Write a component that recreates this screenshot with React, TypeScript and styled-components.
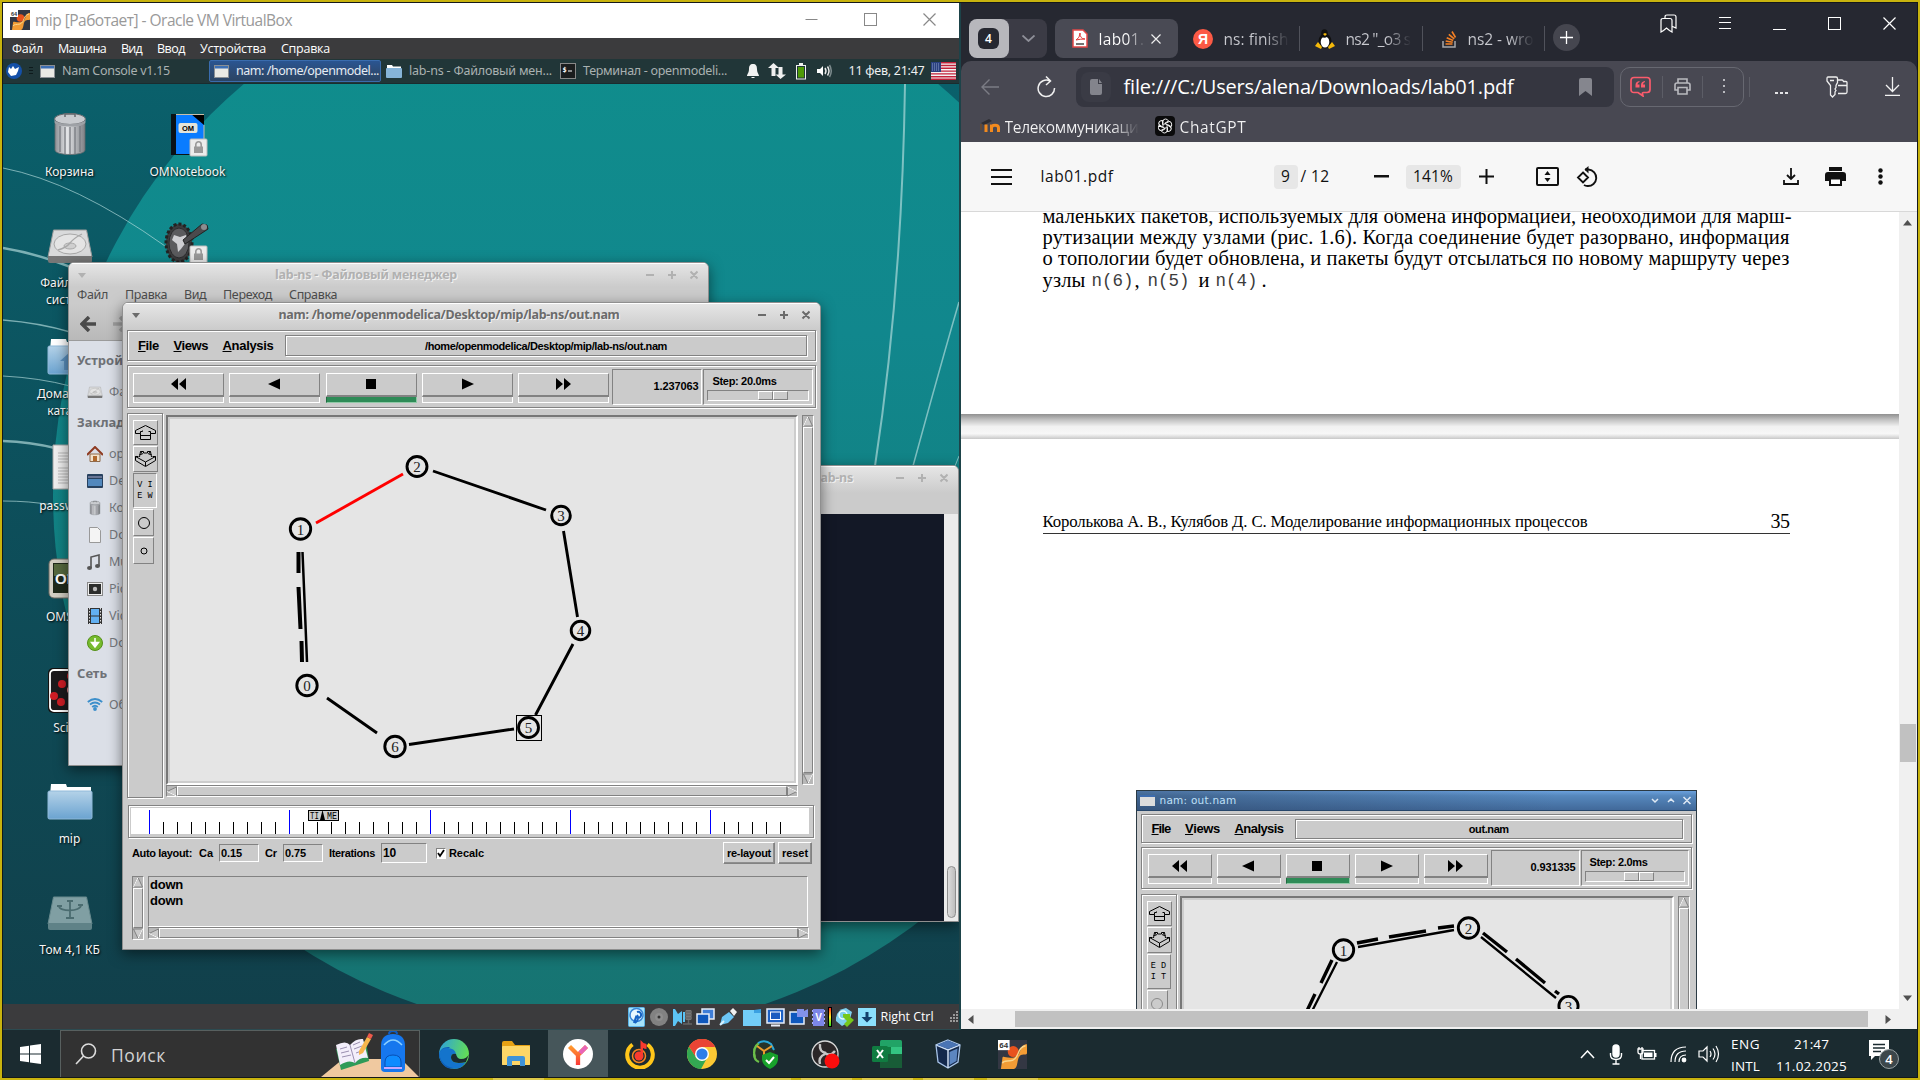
import React, { useLayoutEffect, useRef } from 'react';
import styled, { createGlobalStyle, css } from 'styled-components';

const UI = '"Open Sans", "Noto Sans", sans-serif';
const XFCE = '"Noto Sans", "Open Sans", sans-serif';
const TK = '"Liberation Sans", Arial, sans-serif';
const SERIF = '"Liberation Serif", "Times New Roman", serif';
const MONO = '"Liberation Mono", monospace';

const Global = createGlobalStyle`
  * { box-sizing: border-box; }
  html, body { margin: 0; padding: 0; background: #1c2b30; overflow: hidden; }
  svg { display: block; flex: none; }
`;

/* ---------- text that is tracked to fill a given width ---------- */

const TextBox = styled.span<{ $w: number }>`
  display: block;
  flex: none;
  width: ${p => p.$w}px;
  white-space: pre;
`;

function FitText({ w, className, children }: { w: number; className?: string; children: React.ReactNode }) {
  const inner = useRef<HTMLSpanElement>(null);
  useLayoutEffect(() => {
    const el = inner.current;
    if (!el) return;
    el.style.letterSpacing = '0px';
    const count = Math.max(1, (el.textContent || '').length);
    el.style.letterSpacing = `${(w - el.getBoundingClientRect().width) / count}px`;
  });
  return (
    <TextBox $w={w} className={className}>
      <span ref={inner}>{children}</span>
    </TextBox>
  );
}

/* ---------- screen ---------- */

const Screen = styled.div`
  position: relative;
  width: 1920px;
  height: 1080px;
  overflow: hidden;
  display: flex;
  flex-direction: column;
  background: #1c2b30;
`;
const ScreenEdge = styled.div`
  position: absolute;
  inset: 0;
  border: 2px solid #c8b30e;
  box-shadow: inset 0 0 0 1px #14181a;
  pointer-events: none;
  z-index: 50;
`;
const Windows = styled.div`
  display: flex;
  height: 1030px;
  padding: 3px 3px 0 3px;
`;

/* ---------- virtual machine window ---------- */

const VM = styled.section`
  width: 958px;
  display: flex;
  flex-direction: column;
  border-right: 2px solid #1d4349;
  border-bottom: 1px solid #2c4a50;
  font-family: ${UI};
`;
const VMTitle = styled.header`
  height: 35px;
  flex: none;
  display: flex;
  align-items: center;
  padding: 0 23px 2px 7px;
  background: #fff;
`;
const VMTitleText = styled(FitText)`
  margin: 0 auto 0 5px;
  font-size: 15.5px;
  line-height: 20px;
  color: #999;
`;
const VMButtons = styled.div`
  display: flex;
  gap: 46px;
`;
const VMMenu = styled.nav`
  height: 21px;
  flex: none;
  display: flex;
  align-items: center;
  gap: 15px;
  padding-left: 9px;
  background: #3b3b3d;
`;
const VMMenuItem = styled(FitText)`
  font-size: 12.5px;
  line-height: 20px;
  color: #fff;
`;
const Panel = styled.div`
  height: 25px;
  flex: none;
  display: flex;
  align-items: center;
  background: #213638;
  border-bottom: 1px solid #1a2c2f;
  padding-left: 3px;
  font-family: ${XFCE};
`;
const Grip = styled.div`
  width: 4px;
  height: 9px;
  margin: 0 7px 0 7px;
  background: repeating-linear-gradient(#0e1a1c 0 1px, transparent 1px 3px);
`;
const Task = styled.div<{ $w: number; $on?: boolean }>`
  width: ${p => p.$w}px;
  height: 22px;
  flex: none;
  display: flex;
  align-items: center;
  gap: 7px;
  ${p => p.$on && css`
    background: linear-gradient(#2a5592, #2d4a72 60%, #2a4464);
    border: 1px solid #3a6cae;
    border-radius: 2px;
    padding-left: 4px;
  `}
`;
const TaskLabel = styled(FitText)<{ $on?: boolean }>`
  font-size: 12.5px;
  line-height: 18px;
  color: ${p => (p.$on ? '#e6ecf2' : '#a9b1b1')};
`;
const Tray = styled.div`
  display: flex;
  align-items: center;
  margin-left: auto;
  padding-right: 3px;
`;
const TraySlot = styled.div<{ $l: number }>`
  margin-left: ${p => p.$l}px;
`;
const PanelClock = styled(FitText)`
  margin: 0 6px 0 17px;
  font-size: 12.5px;
  line-height: 18px;
  color: #eef0f0;
`;
const Desktop = styled.div`
  position: relative;
  flex: 1;
  overflow: hidden;
  background: #0b5a66;
`;
const Wallpaper = styled.svg`
  position: absolute;
  inset: 0;
`;
const IconGrid = styled.div`
  position: relative;
  display: grid;
  grid-auto-flow: column;
  grid-template-rows: repeat(8, 111.200px);
  grid-auto-columns: 118px;
  padding: 26px 0 0 7.500px;
`;
const DesktopIcon = styled.div`
  display: flex;
  flex-direction: column;
  align-items: center;
  font-family: ${XFCE};
`;
const IconLabel = styled.div`
  margin-top: 5px;
  font-size: 12px;
  line-height: 17px;
  color: #f4f6f6;
  text-align: center;
  white-space: pre;
  text-shadow: 1px 1px 2px #000;
`;

const VMStatus = styled.footer`
  height: 25px;
  flex: none;
  display: flex;
  align-items: center;
  justify-content: flex-end;
  background: #3b3b3d;
  padding-right: 1px;
`;
const StatusIcons = styled.div`
  display: flex;
  gap: 4px;
  align-items: center;
  margin-right: 3px;
`;
const HostKey = styled(FitText)`
  margin: 0 14px 0 1px;
  font-size: 12.5px;
  color: #fff;
`;

/* ---------- xfce windows ---------- */

const Win = styled.div<{ $x: number; $y: number; $w: number; $h: number }>`
  position: absolute;
  left: ${p => p.$x}px;
  top: ${p => p.$y}px;
  width: ${p => p.$w}px;
  height: ${p => p.$h}px;
  display: flex;
  flex-direction: column;
  background: #cbcbcb;
  border: 1px solid #8f8f8f;
  border-radius: 6px 6px 0 0;
  box-shadow: inset 0 1px #fff, 0 4px 14px rgba(0, 0, 0, 0.5);
  overflow: hidden;
  font-family: ${XFCE};
`;
const WinTitle = styled.div<{ $on?: boolean; $h: number }>`
  height: ${p => p.$h}px;
  flex: none;
  display: flex;
  align-items: center;
  justify-content: space-between;
  padding: 0 10px ${p => p.$h - 24}px 9px;
  background: linear-gradient(#e6e6e6, #cbcbcb);
  box-shadow: inset 0 1px #fff;
  color: ${p => (p.$on ? '#6b6b6b' : '#b1b1b1')};
`;
const WinName = styled(FitText)`
  font-size: 12.5px;
  line-height: 18px;
  font-weight: 700;
  text-shadow: 1px 1px #f2f2f2;
`;
const FmMenu = styled.div`
  display: flex;
  gap: 17px;
  height: 16px;
  flex: none;
  padding-left: 8px;
  align-items: center;
`;
const FmMenuItem = styled(FitText)`
  font-size: 12.5px;
  line-height: 16px;
  color: #4d4d4d;
`;
const FmTools = styled.div`
  display: flex;
  flex: none;
  align-items: center;
  gap: 17px;
  height: 38px;
  padding: 4px 0 0 11px;
  border-bottom: 1px solid #9b9b9b;
  background: linear-gradient(#cbcbcb, #b9b9b9);
`;
const FmSide = styled.div`
  flex: 1;
  padding-top: 7px;
  background: #dbdfe7;
`;
const FmHead = styled.div`
  height: 25px;
  margin-bottom: 5px;
  padding-left: 8px;
  font-size: 13px;
  line-height: 25px;
  font-weight: 700;
  color: #6e7176;
`;
const FmRow = styled.div`
  display: flex;
  align-items: center;
  gap: 6px;
  height: 27px;
  padding-left: 18px;
  font-size: 12.5px;
  color: #75787c;
`;
const FmSection = styled.div`
  margin-bottom: 5px;
`;
const TermBody = styled.div`
  flex: 1;
  margin-top: 21px;
  display: flex;
  background: #131826;
  justify-content: flex-end;
`;
const TermScroll = styled.div`
  width: 14px;
  background: #ebebeb;
  display: flex;
  align-items: flex-end;
  justify-content: center;
  padding-bottom: 3px;
`;
const TermThumb = styled.div`
  width: 9px;
  height: 52px;
  border: 1px solid #8d8d8d;
  border-radius: 5px;
  background: linear-gradient(90deg, #dcdcdc, #bdbdbd);
`;

/* ---------- nam ---------- */

const NamContent = styled.div<{ $top?: number }>`
  flex: 1;
  padding: ${p => p.$top || 0}px 4px 0;
  font-family: ${TK};
  font-weight: 700;
  color: #000;
`;
const groove = css`
  border: 1px solid #828282;
  box-shadow: inset 1px 1px #fff, 1px 1px #fff;
`;
const sunken = css`
  border: 1px solid;
  border-color: #828282 #fff #fff #828282;
`;
const raised = css`
  border: 1px solid;
  border-color: #fff #828282 #828282 #fff;
`;
const NamMenu = styled.div<{ $h: number }>`
  height: ${p => p.$h}px;
  display: flex;
  align-items: center;
  padding: 0 8px 0 10px;
  background: #cbcbcb;
  ${groove}
`;
const NamMenuItem = styled(FitText)`
  margin-right: 14.5px;
  font-size: 13px;
  line-height: 16px;
  &::first-letter { text-decoration: underline; }
`;
const NamPath = styled.div<{ $h: number }>`
  flex: 1;
  height: ${p => p.$h}px;
  margin-left: -3px;
  display: flex;
  align-items: center;
  justify-content: center;
  ${groove}
`;
const NamSmall = styled(FitText)`
  font-size: 11px;
  line-height: 14px;
`;
const NamControls = styled.div<{ $h: number }>`
  height: ${p => p.$h}px;
  margin-top: 4px;
  display: flex;
  align-items: center;
  padding: 0 2px 0 5px;
  background: #cbcbcb;
  ${groove}
`;
const PlayKey = styled.div<{ $w: number; $m: number; $on?: boolean }>`
  width: ${p => p.$w}px;
  height: 30px;
  margin: 2px ${p => p.$m}px 0 0;
  flex: none;
  display: flex;
  flex-direction: column;
  &::after {
    content: '';
    height: 5px;
    border: 1px solid #fff;
    border-top: 0;
    ${p => p.$on && 'background: #2e8b57; border-color: #1f6b40 #8fc9a6 #8fc9a6 #1f6b40;'}
  }
`;
const KeyFace = styled.div`
  flex: 1;
  display: flex;
  align-items: center;
  justify-content: center;
  border: 1px solid;
  border-color: #fff #828282 #828282 #fff;
  border-bottom-width: 2px;
`;
const TimeBox = styled.div<{ $w: number }>`
  width: ${p => p.$w}px;
  height: 36px;
  margin-left: -2px;
  display: flex;
  align-items: center;
  justify-content: flex-end;
  padding: 0 3px 2px 0;
  ${sunken}
`;
const StepBox = styled.div`
  flex: 1;
  height: 36px;
  padding: 4px 3px 0 3px;
  margin-left: 1px;
  ${sunken}
`;
const StepLabel = styled(NamSmall)`
  margin-left: 5px;
`;
const Trough = styled.div`
  height: 11px;
  margin-top: 2px;
  display: flex;
  ${sunken}
`;
const Knob = styled.div<{ $l: number }>`
  margin-left: ${p => p.$l}px;
  width: 30px;
  display: flex;
  &::before, &::after { content: ''; flex: 1; border: 1px solid; border-color: #fff #828282 #828282 #fff; }
`;
const NamBody = styled.div`
  display: flex;
  margin-top: 5px;
`;
const ToolBox = styled.div<{ $h: number }>`
  width: 36px;
  height: ${p => p.$h}px;
  flex: none;
  display: flex;
  flex-direction: column;
  align-items: flex-start;
  gap: 1px;
  padding: 6px 0 0 5px;
  ${groove}
`;
const Tool = styled.div<{ $w: number; $h: number; $in?: boolean }>`
  width: ${p => p.$w}px;
  height: ${p => p.$h}px;
  flex: none;
  display: flex;
  align-items: center;
  justify-content: center;
  ${p => (p.$in ? sunken : raised)}
`;
const ToolWord = styled.div`
  font-family: ${MONO};
  font-weight: 400;
  font-size: 8.5px;
  line-height: 11px;
  white-space: pre;
`;
const CanvasCol = styled.div`
  margin: 2px 0 0 3px;
`;
const NamCanvas = styled.div<{ $w: number; $h: number }>`
  width: ${p => p.$w}px;
  height: ${p => p.$h}px;
  background: #e5e5e5;
  border: 2px solid;
  border-color: #777 #fff #fff #777;
  box-shadow: inset 0 0 0 2px #cdcdcd;
`;
const Scroll = styled.div<{ $len: number; $v?: boolean }>`
  display: flex;
  flex-direction: ${p => (p.$v ? 'column' : 'row')};
  width: ${p => (p.$v ? 12 : p.$len)}px;
  height: ${p => (p.$v ? p.$len : 12)}px;
  background: #b8b8b8;
  flex: none;
  ${sunken}
`;
const ScrollThumb = styled.div`
  flex: 1;
  background: #cbcbcb;
  ${raised}
`;
const VSlot = styled.div`
  margin: 2px 0 0 4px;
`;
const Timeline = styled.div`
  width: 686px;
  height: 33px;
  margin: 7px 0 0 1px;
  padding: 2px;
  ${groove}
`;
const LayoutRow = styled.div`
  display: flex;
  align-items: center;
  height: 22px;
  margin: 4px 0 0 5px;
`;
const Entry = styled.div<{ $w: number; $h: number; $l: number; $r: number }>`
  width: ${p => p.$w}px;
  height: ${p => p.$h}px;
  margin: 0 ${p => p.$r}px 0 ${p => p.$l}px;
  padding-left: 1px;
  display: flex;
  align-items: center;
  ${sunken}
`;
const BigEntryText = styled(FitText)`
  font-size: 12px;
`;
const Check = styled.div`
  width: 10px;
  height: 11px;
  margin: 0 3px 0 9px;
  background: #fff;
  ${sunken}
`;
const TkButton = styled.div<{ $w: number; $l: string }>`
  width: ${p => p.$w}px;
  height: 22px;
  margin-left: ${p => p.$l};
  display: flex;
  align-items: center;
  justify-content: center;
  ${raised}
  box-shadow: inset -1px -1px #8e8e8e;
`;
const LogRow = styled.div`
  display: flex;
  gap: 4px;
  margin: 12px 0 0 5px;
`;
const LogText = styled.div`
  width: 660px;
  height: 51px;
  padding-left: 1px;
  ${sunken}
`;
const LogLine = styled(FitText)`
  font-size: 13px;
  line-height: 16px;
`;

/* ---------- browser ---------- */

const Browser = styled.section`
  width: 957px;
  display: flex;
  flex-direction: column;
  background: #262831;
  font-family: ${UI};
  border-bottom: 1px solid #16292e;
`;
const TabStrip = styled.div`
  height: 58px;
  flex: none;
  display: flex;
  align-items: center;
  padding: 13px 21px 0 8px;
`;
const TabGroup = styled.div`
  width: 78px;
  height: 39px;
  flex: none;
  display: flex;
  align-items: center;
  background: #3b3b45;
  border-radius: 8px;
  margin-right: 8px;
`;
const GroupCount = styled.div`
  width: 40px;
  height: 39px;
  margin-right: 13px;
  display: flex;
  align-items: center;
  justify-content: center;
  border-radius: 8px;
  background: #b7b7bc;
`;
const GroupBadge = styled.div`
  width: 21px;
  height: 21px;
  border-radius: 6px;
  background: #262831;
  color: #fff;
  font-size: 12px;
  font-weight: 600;
  line-height: 21px;
  text-align: center;
`;
const Tab = styled.div<{ $w: number; $on?: boolean; $sep?: boolean; $p: number }>`
  width: ${p => p.$w}px;
  height: 39px;
  flex: none;
  display: flex;
  align-items: center;
  padding-left: ${p => p.$p}px;
  border-radius: 8px;
  ${p => p.$on && 'background: #494a54;'}
  ${p => p.$sep && 'border-radius: 0; background: linear-gradient(#50525b, #50525b) right center / 1px 25px no-repeat;'}
`;
const TabText = styled(FitText)<{ $on?: boolean }>`
  margin-left: 11px;
  font-size: 15.5px;
  line-height: 22px;
  span {
    background: linear-gradient(90deg, ${p => (p.$on ? '#fff' : '#c9cad0')} 62%, transparent);
    -webkit-background-clip: text;
    background-clip: text;
    color: transparent;
  }
`;
const NewTab = styled.div`
  width: 27px;
  height: 27px;
  margin: 0 auto 3px 8px;
  display: flex;
  align-items: center;
  justify-content: center;
  border-radius: 50%;
  background: #45464f;
`;
const WinKeys = styled.div`
  display: flex;
  align-items: center;
  gap: 42px;
  margin-bottom: 31px;
`;
const Toolbar = styled.div`
  height: 81px;
  flex: none;
  background: #484852;
  border-radius: 10px 10px 0 0;
`;
const AddressRow = styled.div`
  display: flex;
  align-items: center;
  height: 51px;
  padding-left: 20px;
`;
const Omnibox = styled.div`
  width: 538px;
  height: 40px;
  flex: none;
  margin-left: 20px;
  display: flex;
  align-items: center;
  padding: 0 22px 0 5px;
  border-radius: 8px;
  background: #353640;
`;
const SiteBadge = styled.div`
  width: 30px;
  height: 30px;
  display: flex;
  align-items: center;
  justify-content: center;
  border-radius: 8px;
  background: #3a3b45;
`;
const Url = styled(FitText)`
  margin: 0 auto 0 13px;
  font-size: 20px;
  line-height: 28px;
  color: #fff;
`;
const Actions = styled.div`
  width: 124px;
  height: 40px;
  flex: none;
  margin-left: 6px;
  display: flex;
  align-items: center;
  padding-left: 9px;
  gap: 11px;
  border: 1px solid #676871;
  border-radius: 10px;
`;
const Rule = styled.i<{ $h: number }>`
  width: 1px;
  height: ${p => p.$h}px;
  flex: none;
  background: #5c5d66;
`;
const More = styled.div`
  display: flex;
  gap: 2px;
  margin: 12px 38px 0 25px;
  i { width: 3px; height: 2px; background: #e4e4e6; }
`;
const Bookmarks = styled.div`
  height: 28px;
  display: flex;
  align-items: center;
  padding: 0 0 0 19px;
`;
const BookmarkText = styled(FitText)<{ $fade?: boolean }>`
  margin: 2px 0 0 5px;
  font-size: 15.5px;
  line-height: 22px;
  span {
    color: transparent;
    background: linear-gradient(90deg, #f2f2f3 ${p => (p.$fade ? '80%, transparent' : '100%, #f2f2f3')});
    -webkit-background-clip: text;
    background-clip: text;
  }
`;
const PdfBar = styled.div`
  height: 70px;
  flex: none;
  display: flex;
  align-items: center;
  padding: 0 32px 0 30px;
  background: #f7f7f7;
  border-bottom: 1px solid #d8d8d8;
`;
const PdfText = styled(FitText)<{ $l: number; $m?: boolean }>`
  margin: 0 0 2px ${p => p.$l}px;
  font-size: 15.5px;
  line-height: 22px;
  font-weight: ${p => (p.$m ? 500 : 400)};
  color: #111;
`;
const PdfField = styled.div<{ $w: number; $l: number; $r: number }>`
  width: ${p => p.$w}px;
  height: 24px;
  flex: none;
  margin: 0 ${p => p.$r}px 0 ${p => p.$l}px;
  padding-bottom: 1px;
  display: flex;
  align-items: center;
  justify-content: center;
  border-radius: 4px;
  background: #e7e7e7;
  font-size: 15.5px;
  color: #111;
`;
const Gap = styled.div<{ $w: number }>`
  width: ${p => p.$w}px;
  flex: none;
`;
const Viewer = styled.div`
  height: 797px;
  display: flex;
`;
const Pages = styled.div`
  width: 938px;
  height: 797px;
  overflow: hidden;
  background: #fff;
`;
const PageTop = styled.article`
  height: 202px;
  padding-left: 82px;
  font-family: ${SERIF};
  overflow: hidden;
`;
const Para = styled.div`
  margin-top: -6px;
  display: flex;
  flex-direction: column;
`;
const Line = styled(FitText)`
  font-size: 20.5px;
  line-height: 21.2px;
  color: #000;
`;
const LastLine = styled.div`
  display: flex;
`;
const Code = styled(FitText)`
  margin: 0 1px 0 6px;
  font-family: ${MONO};
  font-size: 17.5px;
  line-height: 22px;
  color: #3c3c3c;
`;
const PageGap = styled.div`
  height: 25px;
  background: linear-gradient(#909090, #c0c0c0 22%, #f1f1f1 50%, #f7f7f7 78%, #ededed 84%, #c8c8c8);
`;
const PageNext = styled.article`
  padding: 72px 0 0 82px;
`;
const RunningHead = styled.div`
  width: 747px;
  height: 23px;
  display: flex;
  align-items: flex-end;
  justify-content: space-between;
  border-bottom: 1px solid #333;
  font-family: ${SERIF};
  color: #000;
`;
const HeadText = styled(FitText)`
  font-size: 16.8px;
  line-height: 22px;
`;
const FolioText = styled(FitText)`
  font-size: 20px;
  line-height: 24px;
`;
const Figure = styled.div`
  width: 561px;
  height: 400px;
  margin: 256px 0 0 93px;
  border: 1px solid #2b3a44;
  background: #cbcbcb;
`;
const FigTitle = styled.div`
  height: 20px;
  display: flex;
  align-items: center;
  justify-content: space-between;
  padding: 0 4px 1px 3px;
  background: linear-gradient(100deg, rgba(40, 60, 90, 0.45), transparent 75%), linear-gradient(#6aa0dc, #5688bd 25%, #41699a);
  border-bottom: 1px solid #26466a;
`;
const FigName = styled(FitText)`
  margin: 0 auto 0 5px;
  font-family: "DejaVu Sans", sans-serif;
  font-size: 10.5px;
  line-height: 14px;
  color: #bfe0f8;
`;
const VBar = styled.div`
  width: 18px;
  height: 797px;
  display: flex;
  flex-direction: column;
  align-items: center;
  padding: 8px 0;
  background: #f0f0f0;
`;
const VThumb = styled.div`
  width: 16px;
  height: 38px;
  margin: 498px 0 auto;
  background: #c1c1c1;
`;
const HBar = styled.div`
  height: 20px;
  display: flex;
  align-items: center;
  padding: 0 0 0 7px;
  background: #f0f0f0;
`;
const HThumb = styled.div`
  width: 853px;
  height: 16px;
  margin: 0 17px 0 41px;
  background: #c1c1c1;
`;

/* ---------- taskbar ---------- */

const Taskbar = styled.footer`
  position: relative;
  height: 50px;
  display: flex;
  align-items: center;
  padding-bottom: 2px;
  background: #1b2b30;
  font-family: ${UI};
`;
const StartKey = styled.div`
  width: 60px;
  padding-left: 20px;
`;
const Search = styled.div`
  width: 360px;
  height: 48px;
  display: flex;
  align-items: center;
  padding-left: 14px;
  background: #323232;
  border: 1px solid #58605f;
`;
const SearchText = styled(FitText)`
  margin: 2px auto 0 14px;
  font-size: 17.5px;
  color: #d2d2d2;
`;
const AppSlot = styled.div<{ $w: number; $on?: boolean; $run?: boolean }>`
  width: ${p => p.$w}px;
  height: 50px;
  margin-bottom: -2px;
  padding-bottom: 2px;
  flex: none;
  display: flex;
  align-items: center;
  justify-content: center;
  position: relative;
  z-index: ${p => (p.$run ? 60 : 1)};
  ${p => p.$on && 'background: #46565a;'}
  ${p => p.$run && 'background: linear-gradient(#dcc94a, #dcc94a) center bottom / 51px 2px no-repeat;'}
`;
const SysTray = styled.div`
  display: flex;
  align-items: center;
  margin-left: auto;
  padding-right: 20px;
  color: #fff;
`;
const Stack = styled.div<{ $l: number }>`
  margin: 2px 0 0 ${p => p.$l}px;
  display: flex;
  flex-direction: column;
  align-items: center;
`;
const StackText = styled(FitText)`
  font-size: 13.5px;
  line-height: 22px;
  color: #fff;
`;

/* ---------- small drawings ---------- */

const WinIcon = () => (
  <svg width="15" height="13"><rect x=".5" y=".5" width="14" height="12" fill="#e9e9e4" stroke="#8a8f94" /><rect x="1" y="1" width="13" height="2.5" fill="#3c6fb4" /></svg>
);
const FolderMini = () => (
  <svg width="16" height="13"><path d="M1 0h5l1 1.500h8v4H1z" fill="#fff" /><rect y="3" width="16" height="10" rx="1" fill="#86b4d8" /></svg>
);
const Lock = ({ x, y }: { x: number; y: number }) => (
  <g transform={`translate(${x} ${y})`}>
    <rect width="17" height="17" rx="1" fill="#ececec" stroke="#bbb" />
    <rect x="4" y="7.500" width="9" height="6.500" fill="#9a9a9a" />
    <path d="M5.800 8V5.500a2.700 2.700 0 0 1 5.400 0V8" fill="none" stroke="#9a9a9a" strokeWidth="1.600" />
  </g>
);
const TrashPic = ({ s = 48 }: { s?: number }) => (
  <svg width={s} height={s} viewBox="0 0 48 48">
    <defs><linearGradient id="tr" x1="0" x2="1"><stop offset="0" stopColor="#8d8f94" /><stop offset=".4" stopColor="#e4e5e8" /><stop offset="1" stopColor="#7d8085" /></linearGradient></defs>
    <path d="M9 12h30v28c0 6-30 6-30 0z" fill="url(#tr)" stroke="#66696d" strokeWidth=".8" />
    <path d="M14 16v26M19 17v27M24 17v27M29 17v27M34 16v26" stroke="#777a80" strokeWidth="1.300" />
    <ellipse cx="24" cy="9" rx="15.500" ry="5.500" fill="#c9cbcf" stroke="#66696d" />
    <path d="M8.500 9v3c0 6 31 6 31 0V9c0 6.500-31 6.500-31 0z" fill="#9ea1a6" />
    <path d="M19 7V4h10v3" fill="none" stroke="#66696d" strokeWidth="1.500" />
  </svg>
);
const DrivePic = ({ usb, s = 48 }: { usb?: boolean; s?: number }) => (
  <svg width={s} height={s} viewBox="0 0 48 48">
    <path d="M7.500 9h33L46 36H2z" fill={usb ? '#809fa3' : '#d9dadb'} stroke={usb ? '#698a8e' : '#9c9c9c'} />
    <path d="M2 35h44v5q0 2-2 2H4q-2 0-2-2z" fill={usb ? '#5f8287' : '#777'} />
    {usb ? (
      <path d="M24 13v17M13 18c0 6 22 6 22-1M20 30h8M21 13h6M11 18h5M32 17h5" fill="none" stroke="#4b6c70" strokeWidth="1.800" />
    ) : (
      <g fill="none" stroke="#a8a8a8"><ellipse cx="24" cy="23" rx="16" ry="10" fill="#e4e4e4" /><ellipse cx="24" cy="25" rx="6" ry="3" fill="#cfcfcf" /><path d="M36 13q-8 4-12 9-4 5-12 7" strokeWidth="1.300" /></g>
    )}
  </svg>
);
const FolderPic = ({ home }: { home?: boolean }) => (
  <svg width="48" height="48">
    <defs><linearGradient id="fo" x2="0" y2="1"><stop offset="0" stopColor="#b4d2e8" /><stop offset="1" stopColor="#6ba3d0" /></linearGradient></defs>
    <path d="M5 7h15l1 3h24v8H4z" fill="#fff" />
    <rect x="2" y="14" width="44" height="28" rx="1.500" fill="url(#fo)" stroke="#8fb9d9" />
    {home && <path d="M14 29l10-9 10 9h-4v9H18v-9z" fill="#5a8fbd" />}
  </svg>
);
const NotebookPic = () => (
  <svg width="48" height="48">
    <rect x="7" y="4" width="33" height="41" fill="#0a1216" />
    <rect x="12" y="5" width="28" height="39" fill="#0a7cff" />
    <path d="M27 4h13v11z" fill="#000" /><path d="M40 15v30M12 4.500h28" stroke="#c9bfa8" />
    <rect x="14.500" y="13" width="19" height="10" rx="2" fill="#e4e4da" />
    <text x="24" y="21" fontFamily="Liberation Sans" fontWeight="700" fontSize="7.500" textAnchor="middle">OM</text>
    <Lock x={26} y={29} />
  </svg>
);
const GearPic = () => (
  <svg width="48" height="48">
    <ellipse cx="15" cy="22" rx="13" ry="19" fill="#3b3b3d" stroke="#222" strokeWidth="3" strokeDasharray="3 2" />
    <ellipse cx="15" cy="22" rx="10" ry="15" fill="#5b5b5e" stroke="#2b2b2d" />
    <path d="M10 14l6 2 6-2 1 6-6 8-3 3-1-8-5-4z" fill="#cfcfd3" />
    <path d="M19 19L38 3l5 1 1 4-6 4-17 11z" fill="#4a4a4d" stroke="#222" /><circle cx="40" cy="6" r="3" fill="#8d8d90" />
    <Lock x={26} y={25} />
  </svg>
);
const DocPic = () => (
  <svg width="48" height="48"><path d="M7 1h34v44H7z" fill="#efefef" stroke="#a5a5a5" /><path d="M12 9h20M12 12h22M12 15h20M12 18h22M12 24h22M12 27h18M12 30h22M12 33h20M12 36h22M12 39h18" stroke="#b9b9b9" /></svg>
);
const OmsPic = () => (
  <svg width="48" height="48"><rect x="3" y="4" width="42" height="39" rx="5" fill="#d3cfc4" stroke="#6f6b62" /><rect x="7" y="8" width="36" height="30" fill="#202a1b" /><rect x="8" y="9" width="34" height="12" fill="#56693f" /><text x="9" y="29" fontFamily="Liberation Sans" fontSize="15" fontWeight="700" fill="#fff">OM</text></svg>
);
const SciPic = () => (
  <svg width="48" height="48"><rect x="2" y="2" width="44" height="45" rx="5" fill="#14110f" /><rect x="4" y="4" width="41" height="41" rx="4" fill="#1c1a1c" stroke="#fff" strokeWidth="1.800" /><g fill="#cf1d25"><circle cx="16" cy="18" r="4" /><circle cx="8" cy="30" r="4" /><circle cx="15" cy="36" r="4" /><circle cx="25" cy="10" r="4" /><circle cx="25" cy="24" r="4" fill="#e68a8d" /></g></svg>
);
const VBoxLogo = ({ s = 20 }: { s?: number }) => (
  <svg width={s} height={s} viewBox="0 0 20 20"><rect width="20" height="20" fill="#333743" /><circle cx="10.500" cy="8" r="3.800" fill="#e9531d" /><path d="M20 3c-6 0-3 8-9 9-6 1-8-2-8 1l-1 7h9c3-1 2-7 4-9s5 0 5-2z" fill="#f39c35" /><path d="M19 4c-6 1-4 8-9 10-4 1-6 0-7 2" stroke="#fbd58a" fill="none" /><rect width="8" height="7" fill="#fff" /><text x="4" y="5.500" fontSize="5.500" fontFamily="Liberation Sans" fontWeight="700" textAnchor="middle" fill="#333">64</text></svg>
);
const Menu3 = ({ c, w, h, t }: { c: string; w: number; h: number; t: number }) => (
  <svg width={w} height={h}><g fill={c}><rect width={w} height={t} /><rect y={Math.floor((h - t) / 2)} width={w} height={t} /><rect y={h - t} width={w} height={t} /></g></svg>
);
const Cross = ({ c, s, t = 1.200 }: { c: string; s: number; t?: number }) => (
  <svg width={s} height={s}><path d={`M.5 .5L${s - 0.5} ${s - 0.5}M${s - 0.5} .5L.5 ${s - 0.5}`} stroke={c} strokeWidth={t} /></svg>
);
const TitleKeys = () => (
  <svg width="52" height="10" fill="none" stroke="currentColor" strokeWidth="2"><path d="M0 5h8M22 5h8M26 1v8M44.500 1.500l7 7M51.500 1.500l-7 7" /></svg>
);
const TitleCaret = () => (<svg width="8" height="5"><path d="M0 0h8L4 5z" fill="currentColor" /></svg>);

function Arrow({ dir }: { dir: 'u' | 'd' | 'l' | 'r' }) {
  const rot = { u: 0, r: 90, d: 180, l: 270 }[dir];
  return (
    <svg width="10" height="11" viewBox="0 0 10 11"><g transform={`rotate(${rot} 5 5.500)`}><path d="M5 .5L9.500 10h-9z" fill="#cbcbcb" stroke="#828282" /><path d="M5 .5L.5 10" stroke="#fff" /></g></svg>
  );
}
const ScrollBar = ({ len, v }: { len: number; v?: boolean }) => (
  <Scroll $len={len} $v={v}><Arrow dir={v ? 'u' : 'l'} /><ScrollThumb /><Arrow dir={v ? 'd' : 'r'} /></Scroll>
);

const playShapes = [
  'M7 0v12L0 6zM15 0v12L8 6z',
  'M13 0.500v11L1 6z',
  'M2 1h10v10H2z',
  'M2 .5v11L14 6z',
  'M0 0v12l7-6zM8 0v12l7-6z',
];
function PlayKeys({ w, gap }: { w: number; gap: number }) {
  return (
    <>{playShapes.map((d, i) => (
      <PlayKey key={i} $w={w} $m={gap} $on={i === 2}><KeyFace><svg width="15" height="12"><path d={d} /></svg></KeyFace></PlayKey>
    ))}</>
  );
}
function ToolButtons({ word, dim }: { word: string; dim?: boolean }) {
  const ring = dim ? '#8a8a8a' : '#000';
  return (
    <>
      <Tool $w={25} $h={25}><svg width="21" height="16" fill="none" stroke="#000"><path d="M10.500.5l-10 5v3h5v-2h2v-1M10.500.5l10 5v3h-5v-2h-2M5.500 8.500v6h10v-6M5.500 10.500h10" /></svg></Tool>
      <Tool $w={25} $h={26}><svg width="21" height="16" fill="none" stroke="#000"><path d="M5.500.5l2 2.500-3 .5M15.500.5l-2 2.500 3 .5M5.500.5h3v1.500h4V.5h3M5.500.5L4.500 6M15.500.5l1 5.500M.5 5.500l10 5.500 10-5.500M.5 5.500v4l10 6 10-6v-4M10.500 11v4M.5 5.500h3M17.500 5.500h3" /></svg></Tool>
      <Tool $w={24} $h={35} $in={!dim}><ToolWord>{word}</ToolWord></Tool>
      <Tool $w={21} $h={27}><svg width="14" height="14"><circle cx="7" cy="7" r="5.500" fill="none" stroke={ring} /></svg></Tool>
      <Tool $w={21} $h={27}><svg width="8" height="8"><circle cx="4" cy="4" r="3" fill="none" stroke={ring} /></svg></Tool>
    </>
  );
}

type N = [number, number, number, string];
function GraphNode({ n }: { n: N }) {
  return (
    <g><circle cx={n[0]} cy={n[1]} r={n[2]} fill="#e5e5e5" stroke="#000" strokeWidth="2.900" /><text x={n[0]} y={n[1] + 5.500} fontFamily="Liberation Serif" fontWeight="400" fontSize="15" textAnchor="middle" fill="#222">{n[3]}</text></g>
  );
}
const mainNodes: N[] = [[307, 685.500, 10.200, '0'], [300.500, 529, 10.200, '1'], [417, 466.500, 10, '2'], [561, 515.500, 9.300, '3'], [580.500, 630.500, 9.300, '4'], [528.500, 727.500, 10, '5'], [395, 746.500, 10.200, '6']];
const figNodes: N[] = [[1343.500, 950, 10.200, '1'], [1468.500, 928, 10.200, '2'], [1568.500, 1006, 9.600, '3']];

const ticks = Array.from({ length: 46 }, (_, i) => i);

function NamWindow() {
  return (
    <Win $x={119} $y={218} $w={699} $h={648}>
      <WinTitle $on $h={27}><TitleCaret /><WinName w={341}>nam: /home/openmodelica/Desktop/mip/lab-ns/out.nam</WinName><TitleKeys /></WinTitle>
      <NamContent>
        <NamMenu $h={31}>
          <NamMenuItem w={21}>File</NamMenuItem><NamMenuItem w={34.500}>Views</NamMenuItem><NamMenuItem w={51}>Analysis</NamMenuItem>
          <NamPath $h={21}><NamSmall w={242}>/home/openmodelica/Desktop/mip/lab-ns/out.nam</NamSmall></NamPath>
        </NamMenu>
        <NamControls $h={43}>
          <PlayKeys w={91} gap={5.300} />
          <TimeBox $w={90}><NamSmall w={45}>1.237063</NamSmall></TimeBox>
          <StepBox><StepLabel w={64}>Step: 20.0ms</StepLabel><Trough><Knob $l={50} /></Trough></StepBox>
        </NamControls>
        <NamBody>
          <ToolBox $h={385}><ToolButtons word={'V I\nE W'} /></ToolBox>
          <CanvasCol>
            <NamCanvas $w={632} $h={370}>
              <svg width="628" height="365" viewBox="168 417 628 365" stroke="#000" strokeWidth="2.900">
                <path d="M316 523L403 474" stroke="#f00" />
                <path d="M433 471L546 510M563.500 531L577.500 617M573 644L535.500 715M409 744.500L514 729M327 698L377 733" />
                <path d="M302.500 552L304.500 600L307 662" strokeWidth="2.500" />
                <path d="M298.500 552v21M298.500 587L300.500 629M301.500 641L302 662" strokeWidth="4" />
                <g stroke="none">{mainNodes.map(n => <GraphNode key={n[3]} n={n} />)}</g>
                <rect x="516.500" y="715.500" width="25" height="25" fill="none" strokeWidth="1" />
              </svg>
            </NamCanvas>
            <ScrollBar len={632} />
          </CanvasCol>
          <VSlot><ScrollBar v len={370} /></VSlot>
        </NamBody>
        <Timeline>
          <svg width="678" height="26" viewBox="131 808 678 26">
            <rect x="131" y="808" width="678" height="26" fill="#fff" />
            {ticks.map(i => <rect key={i} x={Math.round(149 + i * 14.030)} y={i % 10 ? 822 : 810} width="1" height={i % 10 ? 12 : 24} fill={i % 10 ? '#000' : '#00f'} />)}
            <rect x="308.500" y="810.500" width="30" height="10" fill="#ccc" stroke="#000" />
            <text x="310" y="819" fontFamily="Liberation Mono" fontSize="10" fontWeight="400" textLength="9" lengthAdjust="spacingAndGlyphs">TI</text>
            <text x="327" y="819" fontFamily="Liberation Mono" fontSize="10" fontWeight="400" textLength="10" lengthAdjust="spacingAndGlyphs">ME</text>
            <path d="M322.500 810l-2.500 10h5z" />
          </svg>
        </Timeline>
        <LayoutRow>
          <NamSmall w={60}>Auto layout:</NamSmall><Gap $w={7} />
          <NamSmall w={14}>Ca</NamSmall><Entry $w={40} $h={18} $l={6} $r={6}><NamSmall w={21}>0.15</NamSmall></Entry>
          <NamSmall w={12}>Cr</NamSmall><Entry $w={40} $h={18} $l={6} $r={6}><NamSmall w={21}>0.75</NamSmall></Entry>
          <NamSmall w={46}>Iterations</NamSmall><Entry $w={46} $h={20} $l={6} $r={0}><BigEntryText w={13}>10</BigEntryText></Entry>
          <Check><svg width="8" height="9" fill="none" stroke="#000" strokeWidth="1.800"><path d="M1 4l2 3 4-6" /></svg></Check>
          <NamSmall w={35}>Recalc</NamSmall>
          <TkButton $w={52} $l="239px"><NamSmall w={44}>re-layout</NamSmall></TkButton>
          <TkButton $w={34} $l="3px"><NamSmall w={26}>reset</NamSmall></TkButton>
        </LayoutRow>
        <LogRow>
          <ScrollBar v len={64} />
          <div><LogText><LogLine w={33}>down</LogLine><LogLine w={33}>down</LogLine></LogText><ScrollBar len={661} /></div>
        </LogRow>
      </NamContent>
    </Win>
  );
}

const sideIcons: Record<string, React.ReactNode> = {
  home: <svg width="16" height="16"><path d="M3 8h10v7.500H3z" fill="#f3e3cd" stroke="#8f6a4a" /><path d="M0 9l8-8 8 8" fill="none" stroke="#8e3b22" strokeWidth="2" /><rect x="6" y="10" width="4" height="5" fill="#b0682c" /></svg>,
  desk: <svg width="16" height="14"><rect width="16" height="14" rx="1" fill="#27415f" /><rect x="1" y="5" width="14" height="7" fill="#5288bd" /><path d="M1 3h14" stroke="#aac" /></svg>,
  doc: <svg width="16" height="16"><path d="M2.500.5h8l3 3v12h-11z" fill="#f4f4f4" stroke="#999" /></svg>,
  music: <svg width="16" height="16"><path d="M4 14V3l8-2v11" fill="none" stroke="#555" strokeWidth="1.600" /><ellipse cx="2.500" cy="14" rx="2.500" ry="2" fill="#555" /><ellipse cx="10.500" cy="12" rx="2.500" ry="2" fill="#555" /></svg>,
  pic: <svg width="16" height="14"><rect x=".5" y=".5" width="15" height="13" fill="#eee" stroke="#888" /><rect x="2" y="2" width="12" height="10" fill="#2b2d2c" /><circle cx="8" cy="7" r="2.200" fill="#bbb" /></svg>,
  video: <svg width="16" height="16"><rect x="1" width="14" height="16" fill="#333" /><rect x="4" y="1" width="8" height="6.500" fill="#62b0f2" /><rect x="4" y="8.500" width="8" height="6.500" fill="#62b0f2" /><path d="M2.500 0v16M13.500 0v16" stroke="#ddd" strokeDasharray="1.500 1.500" /></svg>,
  down: <svg width="16" height="16"><circle cx="8" cy="8" r="7.500" fill="#76bb2e" stroke="#549018" /><path d="M8 3v5M4.500 7.500h7L8 12z" fill="#fff" stroke="#fff" strokeWidth="1.500" /></svg>,
  wifi: <svg width="16" height="13" fill="none" stroke="#3c8fcb" strokeWidth="1.800"><path d="M.8 4Q8-2 15.200 4M3 6.500q5-4 10 0M5.200 9q2.800-2.500 5.600 0" /><circle cx="8" cy="11" r="1" /></svg>,
};

function FileManager() {
  return (
    <Win $x={65} $y={178} $w={641} $h={504}>
      <WinTitle $h={24}><TitleCaret /><WinName w={182}>lab-ns - Файловый менеджер</WinName><TitleKeys /></WinTitle>
      <FmMenu>
        <FmMenuItem w={31}>Файл</FmMenuItem><FmMenuItem w={42}>Правка</FmMenuItem><FmMenuItem w={22}>Вид</FmMenuItem><FmMenuItem w={49}>Переход</FmMenuItem><FmMenuItem w={48}>Справка</FmMenuItem>
      </FmMenu>
      <FmTools>
        <svg width="16" height="16" fill="none" stroke="#4a4a4a" strokeWidth="3.500"><path d="M16 8H3M9 1L2 8l7 7" /></svg>
        <svg width="16" height="16" fill="none" stroke="#9d9d9d" strokeWidth="3.500"><path d="M0 8h13M7 1l7 7-7 7" /></svg>
      </FmTools>
      <FmSide>
        <FmSection><FmHead>Устройства</FmHead><FmRow><DrivePic s={16} />Файловая система</FmRow></FmSection>
        <FmSection>
          <FmHead>Закладки</FmHead>
          <FmRow>{sideIcons.home}openmodelica</FmRow>
          <FmRow>{sideIcons.desk}Desktop</FmRow>
          <FmRow><TrashPic s={16} />Корзина</FmRow>
          <FmRow>{sideIcons.doc}Documents</FmRow>
          <FmRow>{sideIcons.music}Music</FmRow>
          <FmRow>{sideIcons.pic}Pictures</FmRow>
          <FmRow>{sideIcons.video}Videos</FmRow>
          <FmRow>{sideIcons.down}Downloads</FmRow>
        </FmSection>
        <FmSection><FmHead>Сеть</FmHead><FmRow>{sideIcons.wifi}Обзор сети</FmRow></FmSection>
      </FmSide>
    </Win>
  );
}

const desktopItems: [React.ReactNode, string][] = [
  [<TrashPic />, 'Корзина'], [<DrivePic />, 'Файловая\nсистема'], [<FolderPic home />, 'Домашний\nкаталог'], [<DocPic />, 'passwd.txt'],
  [<OmsPic />, 'OMShell'], [<SciPic />, 'Scilab'], [<FolderPic />, 'mip'], [<DrivePic usb />, 'Том 4,1 КБ'],
  [<NotebookPic />, 'OMNotebook'], [<GearPic />, 'OMEdit'],
];

const statusIcons = [
  <svg width="17" height="20"><rect x=".5" y=".5" width="16" height="19" rx="1" fill="#a8e4fb" stroke="#5ab4e8" /><circle cx="8.500" cy="8" r="6.500" fill="#e8f8ff" stroke="#3b86d8" strokeWidth="1.500" /><path d="M9 5a3 3 0 1 1-1 5l-2 6M9 8q3 4-2 8" fill="none" stroke="#1664c4" strokeWidth="2" /></svg>,
  <svg width="20" height="20"><circle cx="10" cy="10" r="9" fill="#828282" /><circle cx="10" cy="10" r="4" fill="#8e8e8e" /><circle cx="10" cy="10" r="1.500" fill="#333" /></svg>,
  <svg width="19" height="20"><path d="M0 2l2 0 3 5 4-3v13l-4-3-3 5H0z" fill="#5cc4f4" /><path d="M11 5v10" stroke="#5cc4f4" strokeWidth="2" /><rect x="12.500" y="3" width="6" height="10" rx="1" fill="#787878" /><path d="M10 17h9M15.500 13v4M12 5h7M12 8h7M12 11h7" stroke="#666" strokeWidth="1.500" /></svg>,
  <svg width="19" height="20"><rect x="6" y="2" width="12" height="10" fill="#3f7ed8" stroke="#e8eef8" strokeWidth="1.500" /><rect x="1" y="7" width="12" height="10" fill="#0f58bd" stroke="#e8eef8" strokeWidth="1.500" /></svg>,
  <svg width="19" height="20"><path d="M1 18l2-8 7-5 5 5-6 6z" fill="#6cc6f6" /><path d="M11 4l3-3 4 4-3 4z" fill="#f0f0f0" /><path d="M1 18l4-4" stroke="#d8f2ff" strokeWidth="2" /></svg>,
  <svg width="20" height="20"><path d="M1 3h11l1 2h6v14H1z" fill="#72cdf8" /><path d="M12 3l7-1v4h-7z" fill="#3aa0e2" /></svg>,
  <svg width="19" height="20"><rect x="1" y="2" width="17" height="14" fill="#1c60c4" stroke="#e8eef8" strokeWidth="1.500" /><rect x="4.500" y="5" width="10" height="7.500" fill="#1a5cc0" stroke="#fff" /><path d="M5 18.500h9" stroke="#e8eef8" strokeWidth="2" /></svg>,
  <svg width="19" height="20"><rect x="1" y="5" width="14" height="12" fill="#0f58bd" stroke="#e8eef8" strokeWidth="1.500" /><path d="M8 2h7v2l4-2v8h-11z" fill="#8292ea" /></svg>,
  <svg width="13" height="20"><rect x="1" y="2" width="11" height="17" fill="#7c86e8" /><path d="M.5 3v16M12.500 3v16" stroke="#a8b0ff" strokeDasharray="2 2" /><text x="6.500" y="14" fontSize="10" fontWeight="700" textAnchor="middle" fill="#fff" fontFamily="Liberation Sans">V</text></svg>,
];

const WinKeyGlyphs = () => (
  <VMButtons>
    <svg width="13" height="13"><path d="M.5 6.500h12" stroke="#888" /></svg>
    <svg width="13" height="13"><rect x=".5" y=".5" width="12" height="12" fill="none" stroke="#888" /></svg>
    <Cross c="#888" s={13} />
  </VMButtons>
);

function VMWindow() {
  return (
    <VM>
      <VMTitle><VBoxLogo /><VMTitleText w={257}>mip [Работает] - Oracle VM VirtualBox</VMTitleText><WinKeyGlyphs /></VMTitle>
      <VMMenu>
        <VMMenuItem w={31}>Файл</VMMenuItem><VMMenuItem w={48}>Машина</VMMenuItem><VMMenuItem w={21}>Вид</VMMenuItem>
        <VMMenuItem w={28}>Ввод</VMMenuItem><VMMenuItem w={66}>Устройства</VMMenuItem><VMMenuItem w={49}>Справка</VMMenuItem>
      </VMMenu>
      <Panel>
        <svg width="16" height="16"><circle cx="8" cy="8" r="8" fill="#1450a8" /><path d="M3 4l2 2 2-3 2 3 4-2-1 4-2 4-5 1-3-4z" fill="#fff" /></svg>
        <Grip />
        <Task $w={169}><WinIcon /><TaskLabel w={108}>Nam Console v1.15</TaskLabel></Task>
        <Task $w={172} $on><WinIcon /><TaskLabel $on w={143}>nam: /home/openmodel...</TaskLabel></Task>
        <Gap $w={5} />
        <Task $w={174}><FolderMini /><TaskLabel w={143}>lab-ns - Файловый мен...</TaskLabel></Task>
        <Task $w={168}><svg width="16" height="16"><rect x=".5" y=".5" width="15" height="15" fill="#1b1d1e" stroke="#888" /><text x="2.500" y="8.500" fontSize="7" fontWeight="700" fontFamily="DejaVu Sans Mono" fill="#fff">$</text><path d="M8 8h4" stroke="#fff" /></svg><TaskLabel w={144}>Терминал - openmodeli...</TaskLabel></Task>
        <Tray>
          <svg width="12" height="16" fill="#f2f2f2"><path d="M6 1c3 0 4 2 4 5 0 4 2 5 2 7H0c0-2 2-3 2-7 0-3 1-5 4-5zM4.500 14h3v1h-3z" /></svg>
          <TraySlot $l={9}><svg width="18" height="18" fill="#f0f0f0"><path d="M5.500 1L0 6h3.500v8h4V6H11zM12.500 17L7.500 12.500h3V5h4v7.500H18z" /></svg></TraySlot>
          <TraySlot $l={10}><svg width="10" height="17"><path d="M3 0h4v2h3v14.500H0V2h3z" fill="#f0f0f0" /><rect x="1.500" y="3.500" width="7" height="11.500" fill="#4e9a06" stroke="#213638" /></svg></TraySlot>
          <TraySlot $l={11}><svg width="15" height="14" fill="none" stroke="#e8e8e8" strokeWidth="1.500"><path d="M0 5h3l3-3v10L3 9H0z" fill="#fff" stroke="none" /><path d="M8 4q2 3 0 6M10.500 2.500q3 4.500 0 9" /><path d="M12.500 1q3.500 6 0 12" stroke="#7c8a8c" /></svg></TraySlot>
          <PanelClock w={76}>11 фев, 21:47</PanelClock>
          <svg width="25" height="18"><rect width="25" height="18" fill="#f4f4f4" /><path d="M0 .700h25M0 3.500h25M0 6.300h25M0 9.100h25M0 11.900h25M0 14.700h25M0 17.300h25" stroke="#c2213a" strokeWidth="1.400" /><rect width="10" height="10" fill="#2a4080" /><path d="M1 2h8M1 4h8M1 6h8M1 8h8" stroke="#8c9cc4" strokeDasharray="1 1" /></svg>
        </Tray>
      </Panel>
      <Desktop>
        <Wallpaper width="956" height="920" viewBox="3 84 956 920">
          <defs>
            <linearGradient id="bg" x2="0" y2="1"><stop offset="0" stopColor="#0a606b" /><stop offset=".45" stopColor="#0d4f5b" /><stop offset="1" stopColor="#11404b" /></linearGradient>
            <linearGradient id="ci" x2="0" y2="1"><stop offset="0" stopColor="#0f8f8c" /><stop offset=".35" stopColor="#11878d" /><stop offset=".6" stopColor="#128080" /><stop offset="1" stopColor="#177371" /></linearGradient>
          </defs>
          <rect x="3" y="84" width="956" height="920" fill="url(#bg)" />
          <circle cx="591" cy="495" r="538" fill="url(#ci)" />
          <g fill="none" stroke="#b9dede" strokeOpacity=".65">
            <path d="M3 168Q75 182 165 246" /><path d="M3 248Q40 254 80 271" strokeWidth="2.500" /><path d="M3 320Q40 323 70 332" strokeWidth="1.500" />
            <path d="M3 376Q40 378 70 386" /><path d="M3 441Q30 442 55 448" strokeWidth="2.500" /><path d="M3 501Q30 501 52 505" />
            <path d="M905 84Q902 290 875 466" strokeWidth="2" /><path d="M959 302Q942 360 913 466" strokeWidth="1.500" /><path d="M959 456l-4 10" />
          </g>
        </Wallpaper>
        <IconGrid>
          {desktopItems.map(([pic, name], i) => <DesktopIcon key={i}>{pic}<IconLabel>{name}</IconLabel></DesktopIcon>)}
        </IconGrid>
        <Win $x={499} $y={381} $w={457} $h={457}>
          <WinTitle $h={27}><Gap $w={262} /><WinName w={36}>lab-ns</WinName><TitleKeys /></WinTitle>
          <TermBody><TermScroll><TermThumb /></TermScroll></TermBody>
        </Win>
        <FileManager />
        <NamWindow />
      </Desktop>
      <VMStatus>
        <StatusIcons>
          {statusIcons.map((n, i) => <React.Fragment key={i}>{n}</React.Fragment>)}
        </StatusIcons>
        <svg width="52" height="20" viewBox="0 0 52 20">
          <defs><linearGradient id="ld" x2="0" y2="1"><stop offset="0" stopColor="#f22" /><stop offset=".5" stopColor="#fe2" /><stop offset="1" stopColor="#2d2" /></linearGradient></defs>
          <rect x=".5" y=".5" width="3" height="19" fill="url(#ld)" stroke="#000" />
          <path d="M8 14Q7 3 18 1l6 4-3 10-7 4z" fill="#7fd0ee" /><circle cx="15" cy="8" r="4" fill="none" stroke="#eaffff" strokeWidth="1.500" /><path d="M15 7h7v3l4 3-7 7-3-3 3-3-4-4z" fill="#76c81c" />
          <rect x="30" y="1" width="18" height="18" fill="#8be0fc" /><path d="M37.500 5h3v5h4L39 15.500 33.500 10h4z" fill="#12406c" />
        </svg>
        <HostKey w={53}>Right Ctrl</HostKey>
        <svg width="10" height="12" fill="#999"><path d="M8 0h2v2H8zM8 3h2v2H8zM5 3h2v2H5zM8 6h2v2H8zM5 6h2v2H5zM2 6h2v2H2zM8 9h2v2H8zM5 9h2v2H5zM2 9h2v2H2z" /></svg>
      </VMStatus>
    </VM>
  );
}

function BrowserTop() {
  return (
    <TabStrip>
      <TabGroup><GroupCount><GroupBadge>4</GroupBadge></GroupCount><svg width="13" height="7" fill="none" stroke="#8e8f98" strokeWidth="1.800"><path d="M.5 .5l6 5.500 6-5.500" /></svg></TabGroup>
      <Tab $w={123} $on $p={17}>
        <svg width="16" height="19"><path d="M1 1h10l4 4v13H1z" fill="#fff" stroke="#e24848" strokeWidth="1.500" /><path d="M4 11q4-2 4-7 0 6 5 6-5 0-9 1z" fill="none" stroke="#e23838" /><path d="M4 15h8" stroke="#444" strokeWidth="1.500" /></svg>
        <TabText $on w={46}>lab01.</TabText><Gap $w={6} /><Cross c="#eee" s={10} />
      </Tab>
      <Tab $w={122} $sep $p={15}>
        <svg width="20" height="20"><circle cx="10" cy="10" r="10" fill="#fc5a45" /><text x="10" y="15" fontSize="14" fontWeight="700" textAnchor="middle" fill="#fff" fontFamily="Liberation Sans">Я</text></svg>
        <TabText w={65}>ns: finish</TabText>
      </Tab>
      <Tab $w={123} $sep $p={15}>
        <svg width="20" height="20"><ellipse cx="10" cy="12" rx="6.500" ry="7.500" fill="#111" /><ellipse cx="10" cy="13" rx="4.300" ry="5.500" fill="#fff" /><ellipse cx="9.500" cy="4.500" rx="3.300" ry="4.300" fill="#111" /><path d="M8 5l2-1 2 1-2 2z" fill="#f5b90a" /><path d="M0 17l3-4 4 5-1 2zM20 17l-3-4-4 5 1 2z" fill="#f5b90a" /></svg>
        <TabText w={65}>ns2 "_o3 s</TabText>
      </Tab>
      <Tab $w={122} $sep $p={19}>
        <svg width="15" height="18" fill="none"><path d="M1 11v6h12v-6" stroke="#a5a7ab" strokeWidth="1.500" /><path d="M3.500 14h7M3.700 11l7 1.200M4.700 7.800l6.500 2.800M6.800 4.300l5.400 4.500M10 1.500l3.500 6" stroke="#f48024" strokeWidth="1.600" /></svg>
        <TabText w={66}>ns2 - wro</TabText>
      </Tab>
      <NewTab><svg width="13" height="13" stroke="#fff" strokeWidth="1.300"><path d="M6.500 0v13M0 6.500h13" /></svg></NewTab>
      <WinKeys>
        <svg width="17" height="19" fill="none" stroke="#fff" strokeWidth="1.200"><path d="M1 6.500q0-2 2-2h7q2 0 2 2V18l-2.500-1.500-3-2.500-3 2.500L1 18zM5 4.500V3q0-2 2-2h7q2 0 2 2v11l-3.500-1.500" /></svg>
        <Menu3 c="#fff" w={12} h={12} t={1} />
        <svg width="13" height="13"><path d="M0 12.500h13" stroke="#fff" /></svg>
        <svg width="13" height="13"><rect x=".5" y=".5" width="12" height="12" fill="none" stroke="#fff" /></svg>
        <Cross c="#fff" s={13} />
      </WinKeys>
    </TabStrip>
  );
}

const Printer = ({ c, s }: { c: string; s: number }) => (
  <svg width={s} height={s} viewBox="0 0 17 17" fill="none" stroke={c} strokeWidth="1.600"><path d="M4 5V1h9v4M4 12H1V7q0-2 2-2h11q2 0 2 2v5h-3M4 9.500h9V16H4z" /></svg>
);

function BrowserBars() {
  return (
    <Toolbar>
      <AddressRow>
        <svg width="18" height="16" fill="none" stroke="#7b7c85" strokeWidth="1.400"><path d="M18 8H1M8.500.5L1 8l7.500 7.500" /></svg>
        <Gap $w={38} />
        <svg width="19" height="22" fill="none" stroke="#f0f0f0" strokeWidth="1.500"><path d="M17.500 12A8.200 8.200 0 1 1 13 5M9 .500l4.500 4.500L9 9" /></svg>
        <Omnibox>
          <SiteBadge><svg width="12" height="16"><path d="M2 0h6v5h4v9q0 2-2 2H2q-2 0-2-2V2q0-2 2-2zM9 0l3 4H9z" fill="#83848c" /></svg></SiteBadge>
          <Url w={390}>file:///C:/Users/alena/Downloads/lab01.pdf</Url>
          <svg width="13" height="18"><path d="M2 0h9q2 0 2 2v16l-6.500-5L0 18V2q0-2 2-2z" fill="#85868e" /></svg>
        </Omnibox>
        <Actions>
          <svg width="21" height="21" viewBox="0 0 21 21" fill="none"><path d="M4 1.500h13q3 0 3 3v9q0 3-3 3h-3.500q-1.500 0-1 1.500l.5 2-5-3.500H4q-3 0-3-3v-9q0-3 3-3z" stroke="#fb5b6c" strokeWidth="1.700" /><path d="M9.500 6q-2 .5-2 2.500h2v3H5.500V9q0-3.500 4-4zM15 6q-2 .5-2 2.500h2v3h-4V9q0-3.500 4-4z" fill="#fb5b6c" /></svg>
          <Rule $h={22} /><Printer c="#b9babf" s={17} /><Rule $h={22} />
          <svg width="20" height="15" fill="#b9babf"><path d="M9 0h2v2H9zM9 6h2v2H9zM9 12h2v2H9z" /></svg>
        </Actions>
        <Gap $w={5} /><Rule $h={20} />
        <More><i /><i /><i /></More>
        <svg width="22" height="22" fill="none" stroke="#eee" strokeWidth="1.300"><path d="M2 1h8q1.500 0 1.500 1.500v4L10 9.500v2l-1 1.500 1 1.500-1 1.500v2.500L6.500 21 4.500 19V9.500L1 5V2.500Q1 1 2 1zM4 4.500h4M12 4h4q1 0 1.500 1.500H20q1 0 1 1V16q0 1.500-1.500 1.500H12M12 9.500h9" /></svg>
        <Gap $w={37} />
        <svg width="15" height="19" fill="none" stroke="#f2f2f2" strokeWidth="1.300"><path d="M7.500 0v14M1 8l6.500 6.500L14 8M0 18.300h15" /></svg>
      </AddressRow>
      <Bookmarks>
        <svg width="20" height="14"><path d="M1 4l8-4 3 2-8 4z" fill="#2d2d33" /><path d="M1 5v6" stroke="#7a4a1a" /><path d="M6 13V5.500M11.500 13V5.500M11.500 9q0-2.700 3.500-2.700t3.500 2.700v4" stroke="#f28a1e" strokeWidth="3" fill="none" /></svg>
        <BookmarkText $fade w={134}>Телекоммуникаци</BookmarkText>
        <Gap $w={16} />
        <svg width="20" height="20" viewBox="0 0 20 20"><rect width="20" height="20" rx="4" fill="#0b0b0c" /><g fill="none" stroke="#fff" strokeWidth=".9">{[0, 60, 120, 180, 240, 300].map(a => <path key={a} transform={`rotate(${a} 10 10)`} d="M8 10.700V5.500q0-2.500 2.500-2.500 2 0 3 2L9.800 7.200" />)}</g></svg>
        <BookmarkText w={67}>ChatGPT</BookmarkText>
      </Bookmarks>
    </Toolbar>
  );
}

function PdfToolbar() {
  return (
    <PdfBar>
      <Menu3 c="#111" w={21} h={16} t={2} />
      <PdfText $l={29} $m w={73}>lab01.pdf</PdfText>
      <PdfField $w={24} $l={160} $r={0}>9</PdfField>
      <PdfText $l={3} w={29}>/ 12</PdfText>
      <Gap $w={44} />
      <svg width="15" height="3"><rect width="15" height="2.500" fill="#111" /></svg>
      <PdfField $w={55} $l={17} $r={18}><FitText w={40}>141%</FitText></PdfField>
      <svg width="15" height="15" stroke="#111" strokeWidth="2"><path d="M7.500 0v15M0 7.500h15" /></svg>
      <Gap $w={42} />
      <svg width="23" height="19"><rect x="1" y="1" width="21" height="17" rx="1" fill="none" stroke="#111" strokeWidth="2" /><path d="M11.500 4l3 4h-6zM11.500 15l3-4h-6z" fill="#111" /></svg>
      <Gap $w={17} />
      <svg width="22" height="22" fill="none" stroke="#111" strokeWidth="1.900"><path d="M7 6.500l5 5-5 5-5-5zM9 3.500h3.500a8 8 0 1 1-1 16.500q-2 0-3.500-1" /><path d="M12.500 0L8.500 3.500l4 4z" fill="#111" stroke="none" /></svg>
      <Gap $w={185} />
      <svg width="16" height="17" fill="none" stroke="#111" strokeWidth="1.800"><path d="M8 0v11M4 7l4 4 4-4M1 12v4h14v-4" /></svg>
      <Gap $w={26} />
      <svg width="21" height="19"><path d="M4 0h13v4H4zM3 5h15q3 0 3 3v6h-4v-3H4v3H0V8q0-3 3-3z" fill="#111" /><rect x="5" y="11.500" width="11" height="6.500" fill="#fff" stroke="#111" strokeWidth="2" /></svg>
      <Gap $w={32} />
      <svg width="5" height="17" fill="#111"><circle cx="2.500" cy="2.500" r="2.200" /><circle cx="2.500" cy="8.500" r="2.200" /><circle cx="2.500" cy="14.500" r="2.200" /></svg>
    </PdfBar>
  );
}

function NamFigure() {
  return (
    <Figure>
      <FigTitle>
        <svg width="15" height="11"><rect width="15" height="11" fill="#dcdcdc" /><rect width="15" height="2" fill="#3d6cae" /></svg>
        <FigName w={77}>nam: out.nam</FigName>
        <svg width="41" height="9" fill="none" stroke="#dfe9f4" strokeWidth="1.500"><path d="M1 3l3 3 3-3M17 6l3-3 3 3M32.500 1l7 7M39.500 1l-7 7" /></svg>
      </FigTitle>
      <NamContent $top={3}>
        <NamMenu $h={29}>
          <NamMenuItem w={19}>File</NamMenuItem><NamMenuItem w={35}>Views</NamMenuItem><NamMenuItem w={49}>Analysis</NamMenuItem>
          <NamPath $h={20}><NamSmall w={40}>out.nam</NamSmall></NamPath>
        </NamMenu>
        <NamControls $h={42}>
          <Gap $w={1} />
          <PlayKeys w={64} gap={5} />
          <TimeBox $w={89}><NamSmall w={45}>0.931335</NamSmall></TimeBox>
          <StepBox><StepLabel w={58}>Step: 2.0ms</StepLabel><Trough><Knob $l={38} /></Trough></StepBox>
        </NamControls>
        <NamBody>
          <ToolBox $h={200}><ToolButtons dim word={'E D\nI T'} /></ToolBox>
          <CanvasCol>
            <NamCanvas $w={494} $h={200}>
              <svg width="490" height="196" viewBox="1182 898 490 196" stroke="#000" fill="none">
                <path d="M1358 947L1454 930M1481 937L1556 998M1337 962L1305 1025" strokeWidth="2.300" />
                <path d="M1357 943L1378 939M1389 937L1426 931M1438 928L1454 926M1483 933L1507 952M1516 959L1545 983M1555 991L1559 994M1332 960L1321 983M1315 994L1305 1015" strokeWidth="3.400" />
                <g stroke="none">{figNodes.map(n => <GraphNode key={n[3]} n={n} />)}</g>
              </svg>
            </NamCanvas>
          </CanvasCol>
          <VSlot><ScrollBar v len={200} /></VSlot>
        </NamBody>
      </NamContent>
    </Figure>
  );
}

function BrowserWindow() {
  return (
    <Browser>
      <BrowserTop />
      <BrowserBars />
      <PdfToolbar />
      <Viewer>
        <Pages>
          <PageTop>
            <Para>
              <Line w={749}>маленьких пакетов, используемых для обмена информацией, необходимой для марш-</Line>
              <Line w={747}>рутизации между узлами (рис. 1.6). Когда соединение будет разорвано, информация</Line>
              <Line w={747}>о топологии будет обновлена, и пакеты будут отсылаться по новому маршруту через</Line>
              <LastLine><Line w={43}>узлы</Line><Code w={42}>n(6)</Code><Line w={7}>,</Line><Code w={42}>n(5)</Code><Gap $w={8} /><Line w={11}>и</Line><Code w={42}>n(4)</Code><Line w={6}> .</Line></LastLine>
            </Para>
          </PageTop>
          <PageGap />
          <PageNext>
            <RunningHead>
              <HeadText w={545}>Королькова А. В., Кулябов Д. С. Моделирование информационных процессов</HeadText>
              <FolioText w={19}>35</FolioText>
            </RunningHead>
            <NamFigure />
          </PageNext>
        </Pages>
        <VBar>
          <svg width="9" height="6"><path d="M0 5.500h9L4.500 0z" fill="#505050" /></svg>
          <VThumb />
          <svg width="9" height="6"><path d="M0 .5h9L4.500 6z" fill="#505050" /></svg>
        </VBar>
      </Viewer>
      <HBar>
        <svg width="6" height="9"><path d="M5.500 0v9L0 4.500z" fill="#505050" /></svg>
        <HThumb />
        <svg width="6" height="9"><path d="M.5 0v9L6 4.500z" fill="#505050" /></svg>
      </HBar>
    </Browser>
  );
}

const SchoolDesk = () => (
  <svg width="98" height="46" viewBox="0 0 98 46">
    <path d="M0 46L22 28h58l18 18z" fill="#f0c9a0" />
    <path d="M15 18l30-8 3 20-28 9z" fill="#2f9b58" />
    <path d="M15 14q10-5 14 0 6-7 13-6l5 19q-8-1-13 5-6-4-15 2z" fill="#f3eefa" /><path d="M29 14l5 18M19 18l7-2M20 22l8-2M21 26l9-2M32 14l7-3M33 18l8-3M35 22l8-3" stroke="#9a8fb0" fill="none" />
    <path d="M38 20l8-14 4 2-8 14-4 2z" fill="#f8b64c" /><path d="M46 6l2-4 4 2-2 4z" fill="#ee5a4b" />
    <path d="M60 15q0-12 12-12t12 12v22q0 4-4 4H64q-4 0-4-4z" fill="#1677ee" /><path d="M68 3q0-3 4-3t4 3" fill="none" stroke="#0d5cc4" strokeWidth="2" /><path d="M63 14q9-10 18 0" stroke="#8bd0ff" fill="none" strokeWidth="1.500" /><path d="M64 36v-5q0-7 8-7t8 7v5z" fill="#0e8bff" stroke="#084fb4" /><path d="M63 37h18" stroke="#c8a8ff" strokeWidth="2" />
  </svg>
);

const apps: { w: number; on?: boolean; run?: boolean; icon: React.ReactNode }[] = [
  { w: 68, icon: <svg width="30" height="30" viewBox="0 0 30 30"><defs><linearGradient id="ed" x2="1" y2=".3"><stop offset="0" stopColor="#2b9fe0" /><stop offset="1" stopColor="#62dd58" /></linearGradient></defs><circle cx="15" cy="15" r="15" fill="url(#ed)" /><path d="M0 15q2-8 11-7-4 3-4 8 0 10 12 13Q4 33 0 17z" fill="#0f5cb8" /><path d="M0 14q3-5 8-5 8 0 9 6-5-1-5 4 1 7 15 4-6 9-13 6Q2 27 0 14z" fill="#1474cc" /><path d="M17 15q-5-1-5 4 1 7 15 4l3-8q-2 5-8 5-4 0-5-5z" fill="#1b2b30" /></svg> },
  { w: 60, run: true, icon: <svg width="32" height="26"><path d="M0 2q0-2 2-2h8l3 4h15v20H0z" fill="#e6a114" /><rect y="5" width="28" height="19" rx="1" fill="#fdd667" /><path d="M5 25v-8q0-2 2-2h14q2 0 2 2v8h-5v-5h-8v5z" fill="#3f93d8" /></svg> },
  { w: 60, on: true, icon: <svg width="30" height="30"><defs><linearGradient id="ya" x2="0" y2="1"><stop offset="0" stopColor="#ff9a2e" /><stop offset="1" stopColor="#fa3838" /></linearGradient></defs><circle cx="15" cy="15" r="15" fill="#fff" /><path d="M6.500 7.500L15 16l8.500-8.500M15 15v11" fill="none" stroke="url(#ya)" strokeWidth="4.300" /><path d="M17 14l6.500-6.500" stroke="#e864b8" strokeWidth="4.300" /></svg> },
  { w: 64, icon: <svg width="30" height="30"><path d="M7.500 5.500a12.800 12.800 0 1 0 15 0" fill="none" stroke="#ffc61a" strokeWidth="4" /><circle cx="14" cy="17" r="6.500" fill="none" stroke="#f7861f" strokeWidth="1.500" /><circle cx="14" cy="17" r="4.500" fill="#fa3a2e" /><path d="M15.500 17V1q2 3 6 4v5q-2 0-3.500-1v8z" fill="#fa3a2e" /></svg> },
  { w: 60, icon: <svg width="30" height="30" viewBox="0 0 30 30"><circle cx="15" cy="15" r="15" fill="#fcc934" /><path d="M2 7.500A15 15 0 0 1 28 7.500H15z" fill="#e94435" /><path d="M2 7.500A15 15 0 0 0 14 30l6-11-11-1z" fill="#33a852" /><path d="M2 7.500L9.500 19 15 8h13A15 15 0 0 0 2 7.500z" fill="#e94435" /><circle cx="15" cy="15" r="7" fill="#fff" /><circle cx="15" cy="15" r="5.600" fill="#2f7de9" /></svg> },
  { w: 66, run: true, icon: <svg width="30" height="30"><circle cx="14" cy="13" r="11" fill="#26332a" /><path d="M5 18q-3-9 4-14M9 23q-5-2-5-8" fill="none" stroke="#6cc04a" strokeWidth="2.200" /><path d="M8 4q7-4 13 1l3 6" fill="none" stroke="#2aa6d8" strokeWidth="2" /><path d="M7 7l7 5 8-5M14 12v6" stroke="#eb9b2c" strokeWidth="2" fill="none" /><path d="M20 13l8 3v5q-1 6-8 9-7-3-8-9v-5z" fill="#18a12b" /><path d="M16 21l3 3 5-6" fill="none" stroke="#fff" strokeWidth="2" /></svg> },
  { w: 56, run: true, icon: <svg width="30" height="30"><circle cx="14" cy="15" r="13" fill="#2b2728" stroke="#d8d8d8" strokeWidth="1.300" /><path d="M9 5q-1 8 6 9M24 12q-5 6-10 2M9 25q-2-7 5-10" fill="none" stroke="#c6c6c6" strokeWidth="2.400" /><circle cx="21" cy="22" r="7.500" fill="#fb0d0d" /></svg> },
  { w: 66, run: true, icon: <svg width="30" height="28"><rect x="8" width="22" height="28" rx="1.500" fill="#21a366" /><rect x="8" y="7" width="11" height="7" fill="#107c41" /><rect x="19" y="7" width="11" height="7" fill="#33c481" /><rect x="8" y="14" width="22" height="14" fill="#185c37" /><rect y="6" width="16" height="16" rx="1.500" fill="#107c41" /><path d="M5 10l6 8M11 10l-6 8" stroke="#fff" strokeWidth="2" /></svg> },
  { w: 56, run: true, icon: <svg width="26" height="30"><path d="M13 1l12 5-2 17-10 6L3 23 1 6z" fill="#14294c" stroke="#a8c4e8" strokeWidth="1.300" /><path d="M1.500 6L13 11l11.500-5M13 11v18" stroke="#cfe0f5" strokeWidth="1.500" fill="none" /><path d="M2 6l11-4.500L24 6l-11 4z" fill="#4a74b4" /><path d="M14.500 13l8-3.500-1 12.500-7 4z" fill="#5c86c0" /></svg> },
  { w: 72, run: true, icon: <VBoxLogo s={29} /> },
];

export default function App() {
  return (
    <>
      <Global />
      <Screen>
        <Windows><VMWindow /><BrowserWindow /></Windows>
        <Taskbar>
          <StartKey><svg width="21" height="20" fill="#fff"><path d="M0 3l9-1.300V9.500H0zM10 1.500L21 0v9.500H10zM0 10.500h9v7.800L0 17zM10 10.500h11V20l-11-1.500z" /></svg></StartKey>
          <Search>
            <svg width="22" height="22" fill="none" stroke="#ddd" strokeWidth="1.600"><circle cx="13.500" cy="8" r="7" /><path d="M8.500 13L1 21" /></svg>
            <SearchText w={55}>Поиск</SearchText><SchoolDesk />
          </Search>
          {apps.map((a, i) => <AppSlot key={i} $w={a.w} $on={a.on} $run={a.run}>{a.icon}</AppSlot>)}
          <SysTray>
            <svg width="15" height="9" fill="none" stroke="#fff" strokeWidth="1.500"><path d="M1 8l6.500-7L14 8" /></svg>
            <Gap $w={14} />
            <svg width="14" height="21" fill="none" stroke="#fff" strokeWidth="1.400"><rect x="4" y="1" width="6" height="12" rx="3" fill="#fff" /><path d="M1.500 9v2q0 4.500 5.500 4.500t5.500-4.500V9M7 15.500V20M3.500 20h7" /></svg>
            <Gap $w={14} />
            <svg width="20" height="14" fill="none" stroke="#fff" strokeWidth="1.300"><rect x="5" y="3.500" width="12.500" height="8.500" /><path d="M18.500 6v4" strokeWidth="2" /><rect x="7" y="5.500" width="8.500" height="4.500" fill="#fff" stroke="none" /><path d="M1 2h5v3q0 2-2.500 2T1 5zM2 0v2M5 0v2M3.500 7v5" /></svg>
            <Gap $w={13} />
            <svg width="17" height="17" fill="none" stroke="#fff" strokeWidth="1.200"><path d="M1 16Q1 1 16 1M5 16Q5 5 16 5M9 16q0-7 7-7" /><circle cx="14" cy="14" r="1.800" fill="#fff" /></svg>
            <Gap $w={11} />
            <svg width="22" height="18" fill="none" stroke="#fff" strokeWidth="1.200"><path d="M1 6h4l4-4v14l-4-4H1zM12 6q2 3 0 6M15 3.500q4 5.500 0 11M18 1q5 8 0 16" /></svg>
            <Stack $l={11}><StackText w={29}>ENG</StackText><StackText w={29}>INTL</StackText></Stack>
            <Stack $l={16}><StackText w={35}>21:47</StackText><StackText w={71}>11.02.2025</StackText></Stack>
            <Gap $w={21} />
            <svg width="32" height="32" viewBox="0 0 32 32"><path d="M1 2h20v16H7l-4 4v-4H1z" fill="#fff" /><path d="M5 6.500h12M5 10h12M5 13.500h8" stroke="#1b2b30" strokeWidth="1.300" /><circle cx="21" cy="21" r="9.500" fill="#3c474b" stroke="#96a0a2" /><text x="21" y="26" fontFamily="Open Sans" fontWeight="600" fontSize="13" textAnchor="middle" fill="#fff">4</text></svg>
          </SysTray>
        </Taskbar>
        <ScreenEdge />
      </Screen>
    </>
  );
}
